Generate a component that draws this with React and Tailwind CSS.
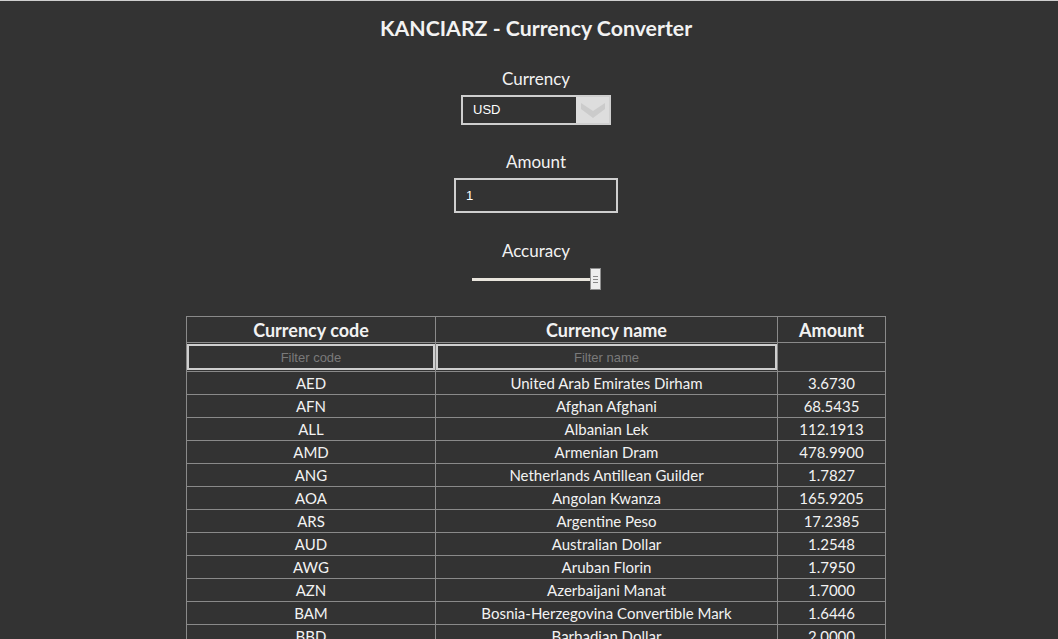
import { useState } from "react";

const rates = [
  ["AED", "United Arab Emirates Dirham", "3.6730"],
  ["AFN", "Afghan Afghani", "68.5435"],
  ["ALL", "Albanian Lek", "112.1913"],
  ["AMD", "Armenian Dram", "478.9900"],
  ["ANG", "Netherlands Antillean Guilder", "1.7827"],
  ["AOA", "Angolan Kwanza", "165.9205"],
  ["ARS", "Argentine Peso", "17.2385"],
  ["AUD", "Australian Dollar", "1.2548"],
  ["AWG", "Aruban Florin", "1.7950"],
  ["AZN", "Azerbaijani Manat", "1.7000"],
  ["BAM", "Bosnia-Herzegovina Convertible Mark", "1.6446"],
  ["BBD", "Barbadian Dollar", "2.0000"],
  ["BDT", "Bangladeshi Taka", "82.7650"],
  ["BGN", "Bulgarian Lev", "1.6445"],
];

export default function App() {
  const [codeFilter, setCodeFilter] = useState("");
  const [nameFilter, setNameFilter] = useState("");

  const rows = rates.filter(
    ([code, name]) =>
      code.toLowerCase().includes(codeFilter.toLowerCase()) &&
      name.toLowerCase().includes(nameFilter.toLowerCase())
  );

  return (
    <div className="min-h-screen border-t border-[#cfcfcf] bg-[#333333] pl-[14px] text-[#f2f2f2] font-['Lato',sans-serif]">
      <h1 className="pt-[12px] text-center text-[21.3px] font-bold leading-[30px]">
        KANCIARZ - Currency Converter
      </h1>

      <div className="mt-[24px] flex flex-col items-center">
        <label className="text-[17px] leading-[24px]">Currency</label>
        <div className="mt-[4px] flex h-[30px] w-[150px] border-2 border-[#cfcfcf] bg-[#333333]">
          <div className="flex flex-1 items-center pl-[10px] font-['Liberation_Sans',sans-serif] text-[13px] text-white">
            USD
          </div>
          <div className="flex w-[33px] items-center justify-center bg-[#dddddd]">
            <svg width="24" height="18" viewBox="0 0 24 18">
              <polygon points="0,2 12,10 24,2 24,8 12,17 0,8" fill="#cbcbcb" />
            </svg>
          </div>
        </div>

        <label className="mt-[25px] text-[17px] leading-[24px]">Amount</label>
        <div className="mt-[4px] flex h-[35px] w-[164px] items-center border-2 border-[#cfcfcf] pl-[10px] font-['Liberation_Sans',sans-serif] text-[13px] text-white">
          1
        </div>

        <label className="mt-[26px] text-[17px] leading-[24px]">Accuracy</label>
        <div className="mt-[5px] flex h-[22px] items-center">
          <div className="h-[3px] w-[118px] bg-[#e9e5dd]" />
          <div className="flex h-[22px] w-[11px] flex-col items-center justify-center gap-[2px] border border-[#8f8f8f] bg-[#eeeeee]">
            <div className="h-px w-[5px] bg-[#888]" />
            <div className="h-px w-[5px] bg-[#888]" />
            <div className="h-px w-[5px] bg-[#888]" />
          </div>
        </div>
      </div>

      <table className="mx-auto mt-[26px] w-[700px] border-collapse border border-[#8a8a8a] text-center">
        <thead>
          <tr className="h-[26px]">
            <th className="w-[249px] border border-[#8a8a8a] text-[18px] font-bold leading-[22px]">Currency code</th>
            <th className="w-[342px] border border-[#8a8a8a] text-[18px] font-bold leading-[22px]">Currency name</th>
            <th className="border border-[#8a8a8a] text-[18px] font-bold leading-[22px]">Amount</th>
          </tr>
          <tr className="h-[29px]">
            <td className="border border-[#8a8a8a] p-0">
              <input
                value={codeFilter}
                onChange={(e) => setCodeFilter(e.target.value)}
                placeholder="Filter code"
                className="block h-[26px] w-full border-2 border-[#cfcfcf] bg-[#333333] text-center font-['Liberation_Sans',sans-serif] text-[13px] text-white outline-none placeholder:text-[#7a7a7a]"
              />
            </td>
            <td className="border border-[#8a8a8a] p-0">
              <input
                value={nameFilter}
                onChange={(e) => setNameFilter(e.target.value)}
                placeholder="Filter name"
                className="block h-[26px] w-full border-2 border-[#cfcfcf] bg-[#333333] text-center font-['Liberation_Sans',sans-serif] text-[13px] text-white outline-none placeholder:text-[#7a7a7a]"
              />
            </td>
            <td className="border border-[#8a8a8a]" />
          </tr>
        </thead>
        <tbody>
          {rows.map(([code, name, amount]) => (
            <tr key={code} className="h-[23px] text-[15px] leading-[20px]">
              <td className="border border-[#8a8a8a]">{code}</td>
              <td className="border border-[#8a8a8a]">{name}</td>
              <td className="border border-[#8a8a8a]">{amount}</td>
            </tr>
          ))}
        </tbody>
      </table>
    </div>
  );
}
